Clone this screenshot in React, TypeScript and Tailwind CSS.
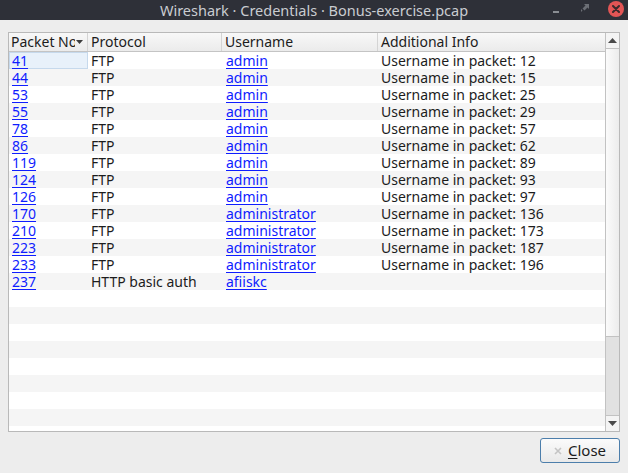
import React from 'react';

type Row = { no: number; proto: string; user: string; info: string };

const rows: Row[] = [
  { no: 41, proto: 'FTP', user: 'admin', info: 'Username in packet: 12' },
  { no: 44, proto: 'FTP', user: 'admin', info: 'Username in packet: 15' },
  { no: 53, proto: 'FTP', user: 'admin', info: 'Username in packet: 25' },
  { no: 55, proto: 'FTP', user: 'admin', info: 'Username in packet: 29' },
  { no: 78, proto: 'FTP', user: 'admin', info: 'Username in packet: 57' },
  { no: 86, proto: 'FTP', user: 'admin', info: 'Username in packet: 62' },
  { no: 119, proto: 'FTP', user: 'admin', info: 'Username in packet: 89' },
  { no: 124, proto: 'FTP', user: 'admin', info: 'Username in packet: 93' },
  { no: 126, proto: 'FTP', user: 'admin', info: 'Username in packet: 97' },
  { no: 170, proto: 'FTP', user: 'administrator', info: 'Username in packet: 136' },
  { no: 210, proto: 'FTP', user: 'administrator', info: 'Username in packet: 173' },
  { no: 223, proto: 'FTP', user: 'administrator', info: 'Username in packet: 187' },
  { no: 233, proto: 'FTP', user: 'administrator', info: 'Username in packet: 196' },
  { no: 237, proto: 'HTTP basic auth', user: 'afiiskc', info: '' },
];

const EMPTY_ROWS = 10;

function TitleBar() {
  return (
    <div className="relative flex h-[20px] shrink-0 items-center justify-center bg-[#2e3038]">
      <span className="text-[14.5px] leading-none text-[#c9ccd1]">
        Wireshark · Credentials · Bonus-exercise.pcap
      </span>
      <div className="absolute right-[4px] top-[1px] flex items-center">
        <span className="mr-[22px] mt-[6px] block h-[2px] w-[6px] bg-[#8a8d93]" />
        <svg width="8" height="8" viewBox="0 0 8 8" className="mr-[19px] mb-[2px]">
          <path d="M3 0H8V5L6.5 3.5L3.5 6.5L1.5 4.5L4.5 1.5Z" fill="#6c6f76" />
          <path d="M0 5L1.5 6.5L0 8Z" fill="#6c6f76" />
        </svg>
        <span className="flex h-[16px] w-[16px] items-center justify-center rounded-full bg-[#e25555]">
          <svg width="8" height="8" viewBox="0 0 8 8">
            <path d="M1 1L7 7M7 1L1 7" stroke="#3a2a2c" strokeWidth="2" strokeLinecap="round" />
          </svg>
        </span>
      </div>
    </div>
  );
}

function HeaderCell({ children, className }: { children: React.ReactNode; className: string }) {
  return (
    <div className={`flex h-full items-center overflow-hidden whitespace-nowrap border-r border-[#d4d4d4] ${className}`}>
      {children}
    </div>
  );
}

function Scrollbar() {
  return (
    <div className="flex w-[14px] shrink-0 flex-col border-l border-[#c2c2c2]">
      <div className="flex h-[16px] shrink-0 items-center justify-center border-b border-[#c2c2c2] bg-[#f4f4f4]">
        <svg width="9" height="5" viewBox="0 0 9 5">
          <path d="M0 5L4.5 0L9 5Z" fill="#4a4a4a" />
        </svg>
      </div>
      <div className="h-[288px] shrink-0 border-b border-[#c2c2c2] bg-gradient-to-r from-[#fbfbfb] to-[#ececec]" />
      <div className="flex-1 bg-[#e1e1e1]" />
      <div className="flex h-[16px] shrink-0 items-center justify-center border-t border-[#c2c2c2] bg-[#f4f4f4]">
        <svg width="9" height="5" viewBox="0 0 9 5">
          <path d="M0 0L4.5 5L9 0Z" fill="#4a4a4a" />
        </svg>
      </div>
    </div>
  );
}

export default function App() {
  return (
    <div
      className="flex h-[473px] w-[628px] flex-col overflow-hidden bg-[#ededed] text-[#1c1c1c]"
      style={{ fontFamily: '"Noto Sans", "Open Sans", sans-serif' }}
    >
      <TitleBar />

      <div className="ml-[8px] mt-[12px] flex h-[400px] w-[612px] border border-[#b9b9b9] bg-white">
        <div className="flex min-w-0 flex-1 flex-col overflow-hidden">
          <div className="flex h-[19px] shrink-0 border-b border-[#c4c4c4] bg-gradient-to-b from-[#f8f8f8] to-[#ebebeb] text-[14px] leading-[18px]">
            <HeaderCell className="relative w-[79px] pl-[2px]">
              <span className="block w-[64px] overflow-hidden">Packet No.</span>
              <svg width="7" height="4" viewBox="0 0 7 4" className="absolute right-[4px] top-[7px]">
                <path d="M0 0L3.5 4L7 0Z" fill="#3c3c3c" />
              </svg>
            </HeaderCell>
            <HeaderCell className="w-[134px] pl-[3px]">Protocol</HeaderCell>
            <HeaderCell className="w-[156px] pl-[3px]">Username</HeaderCell>
            <div className="flex h-full flex-1 items-center pl-[3px]">Additional Info</div>
          </div>

          {rows.map((r, i) => (
            <div
              key={r.no}
              className={`flex h-[17px] shrink-0 items-center overflow-hidden whitespace-nowrap text-[14px] leading-[17px] ${
                i % 2 ? 'bg-[#f5f5f5]' : 'bg-white'
              }`}
            >
              <div
                className={`flex h-full w-[79px] shrink-0 items-center ${
                  i === 0 ? 'border border-[#c6d9ec] bg-[#e8f1fa] pl-[2px]' : 'pl-[3px]'
                }`}
              >
                <a className="text-[#0f1dff] underline underline-offset-2">{r.no}</a>
              </div>
              <div className="w-[134px] shrink-0 pl-[3px]">{r.proto}</div>
              <div className="w-[156px] shrink-0 pl-[4px]">
                <a className="text-[#0f1dff] underline underline-offset-2">{r.user}</a>
              </div>
              <div className="min-w-0 flex-1 pl-[3px]">{r.info}</div>
            </div>
          ))}

          {Array.from({ length: EMPTY_ROWS }).map((_, j) => (
            <div
              key={`e${j}`}
              className={`h-[17px] shrink-0 ${(rows.length + j) % 2 ? 'bg-[#f5f5f5]' : 'bg-white'}`}
            />
          ))}
        </div>
        <Scrollbar />
      </div>

      <div className="mr-[8px] mt-[6px] flex justify-end">
        <button
          type="button"
          className="flex h-[25px] w-[80px] items-center justify-center gap-[6px] rounded-[3px] border border-[#4c7eab] bg-gradient-to-b from-[#fbfbfb] to-[#e9e9e9] text-[15px]"
        >
          <svg width="8" height="8" viewBox="0 0 8 8">
            <path d="M1 1L7 7M7 1L1 7" stroke="#c4c4c4" strokeWidth="1.6" />
          </svg>
          <span>
            <span className="underline underline-offset-2">C</span>lose
          </span>
        </button>
      </div>
    </div>
  );
}
